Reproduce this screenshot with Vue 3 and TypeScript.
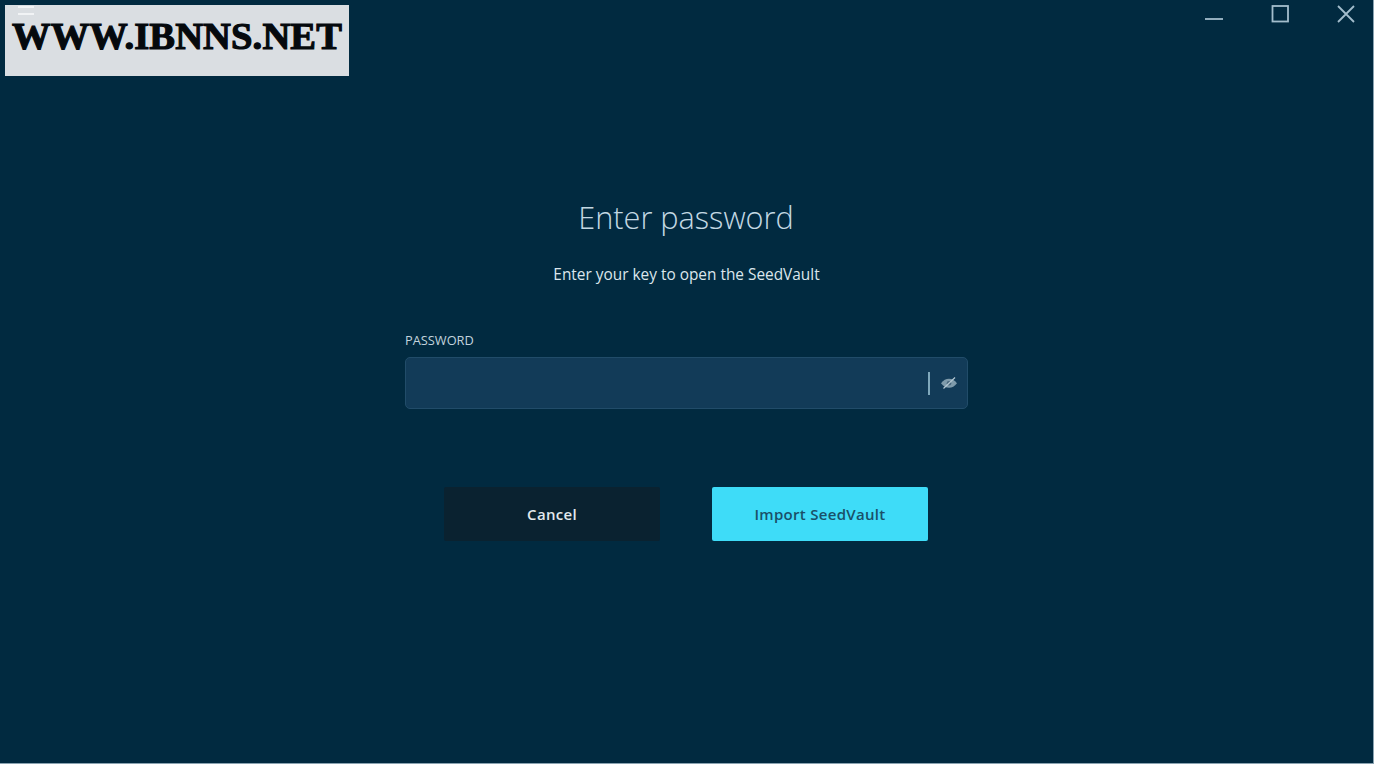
<template>
  <div class="screen">
    <div class="window">
      <div class="titlebar">
        <button class="win-btn" aria-label="Minimize">
          <svg width="20" height="20" viewBox="0 0 20 20"><path d="M1 15h18" /></svg>
        </button>
        <button class="win-btn" aria-label="Maximize">
          <svg width="20" height="20" viewBox="0 0 20 20"><rect x="2.500" y="2" width="15.500" height="15.500" /></svg>
        </button>
        <button class="win-btn" aria-label="Close">
          <svg width="20" height="20" viewBox="0 0 20 20"><path d="M2 2l16 16M18 2L2 18" /></svg>
        </button>
      </div>

      <main class="dialog">
        <h1 class="title">Enter password</h1>
        <p class="subtitle">Enter your key to open the SeedVault</p>

        <div class="field">
          <label class="field-label" for="pw">PASSWORD</label>
          <div class="input-box">
            <input id="pw" v-model="password" :type="visible ? 'text' : 'password'" class="input" />
            <span class="sep"></span>
            <button class="eye" aria-label="Show password" @click="visible = !visible">
              <svg width="18" height="14" viewBox="0 0 18 14">
                <path class="eye-fill" d="M1 7.200C3.400 4 6 2.700 9 2.700s5.600 1.300 8 4.500c-2.400 3.200-5 4.500-8 4.500S3.400 10.400 1 7.200z" />
                <circle class="eye-pupil" cx="9" cy="7.200" r="2.300" />
                <path class="eye-slash" d="M3.500 12.500L15 1.500" />
              </svg>
            </button>
          </div>
        </div>

        <div class="actions">
          <button class="btn btn-cancel">Cancel</button>
          <button class="btn btn-import">Import SeedVault</button>
        </div>
      </main>

      <div class="watermark">
        <span class="menu-line line-a"></span>
        <span class="menu-line line-b"></span>
        <span class="watermark-text">WWW.IBNNS.NET</span>
      </div>
    </div>
  </div>
</template>

<script setup lang="ts">
import { ref } from 'vue'

const password = ref('')
const visible = ref(false)
</script>

<style>
html,
body {
  margin: 0;
  background: #fff;
}
</style>

<style scoped>
.screen {
  width: 1380px;
  height: 768px;
  overflow: hidden;
  background: #fff;
}

.window {
  position: relative;
  box-sizing: border-box;
  width: 1374px;
  height: 764px;
  background: #012a40;
  border-right: 1px solid #8aa3b1;
  border-bottom: 1px solid #8aa3b1;
  font-family: "Open Sans", "Noto Sans", sans-serif;
  display: flex;
  flex-direction: column;
}

.titlebar {
  display: flex;
  justify-content: flex-end;
  gap: 46px;
  padding: 4px 17px 0 0;
}

.win-btn {
  width: 20px;
  height: 20px;
  padding: 0;
  border: 0;
  background: none;
  display: block;
}

.win-btn svg {
  display: block;
  fill: none;
  stroke: #a3bdcc;
  stroke-width: 1.800;
}

.dialog {
  display: flex;
  flex-direction: column;
  align-items: center;
  padding-top: 171px;
}

.title {
  margin: 0 0 0 -1px;
  font-size: 30.700px;
  line-height: 44px;
  font-weight: 300;
  color: #c3d8e3;
}

.subtitle {
  margin: 26px 0 0;
  font-size: 15.400px;
  line-height: 20px;
  color: #dbe6ec;
}

.field {
  width: 563px;
  margin-top: 47px;
}

.field-label {
  display: block;
  font-size: 12.800px;
  line-height: 16px;
  color: #c2d3dd;
  margin-bottom: 9px;
}

.input-box {
  box-sizing: border-box;
  height: 52px;
  display: flex;
  align-items: center;
  padding-right: 9px;
  background: #123b58;
  border: 1px solid #214c69;
  border-radius: 5px;
}

.input {
  flex: 1;
  min-width: 0;
  height: 100%;
  padding: 0 10px;
  border: 0;
  outline: 0;
  background: transparent;
  color: #d6e3ea;
  font: inherit;
}

.sep {
  width: 2px;
  height: 23px;
  margin-right: 10px;
  background: #7fa8bb;
}

.eye {
  width: 18px;
  height: 14px;
  padding: 0;
  border: 0;
  background: none;
}

.eye svg {
  display: block;
}

.eye-fill {
  fill: #7f9bab;
}

.eye-pupil {
  fill: #48677c;
}

.eye-slash {
  fill: none;
  stroke: #b5c8d3;
  stroke-width: 1.200;
}

.actions {
  display: flex;
  gap: 52px;
  margin: 78px 0 0 -1px;
}

.btn {
  width: 216px;
  height: 54px;
  padding: 0;
  border: 0;
  border-radius: 2px;
  font-family: inherit;
  font-size: 15px;
  font-weight: 600;
  letter-spacing: 0.300px;
}

.btn-cancel {
  background: #0a2230;
  color: #e2e9ed;
}

.btn-import {
  background: #3edcf8;
  color: #1a5068;
}

.watermark {
  position: absolute;
  left: 5px;
  top: 5px;
  width: 344px;
  height: 71px;
  background: #dadee2;
  display: flex;
  align-items: center;
  justify-content: center;
  overflow: hidden;
}

.menu-line {
  position: absolute;
  left: 13px;
  width: 16px;
  height: 2px;
  background: #f1f3f5;
}

.line-a {
  top: 1px;
}

.line-b {
  top: 8px;
}

.watermark-text {
  font-family: "Liberation Serif", serif;
  font-size: 38.500px;
  font-weight: 700;
  line-height: 1;
  letter-spacing: 0.150px;
  color: #05090d;
  -webkit-text-stroke: 1.200px #05090d;
  white-space: nowrap;
  margin-top: -8px;
}
</style>
